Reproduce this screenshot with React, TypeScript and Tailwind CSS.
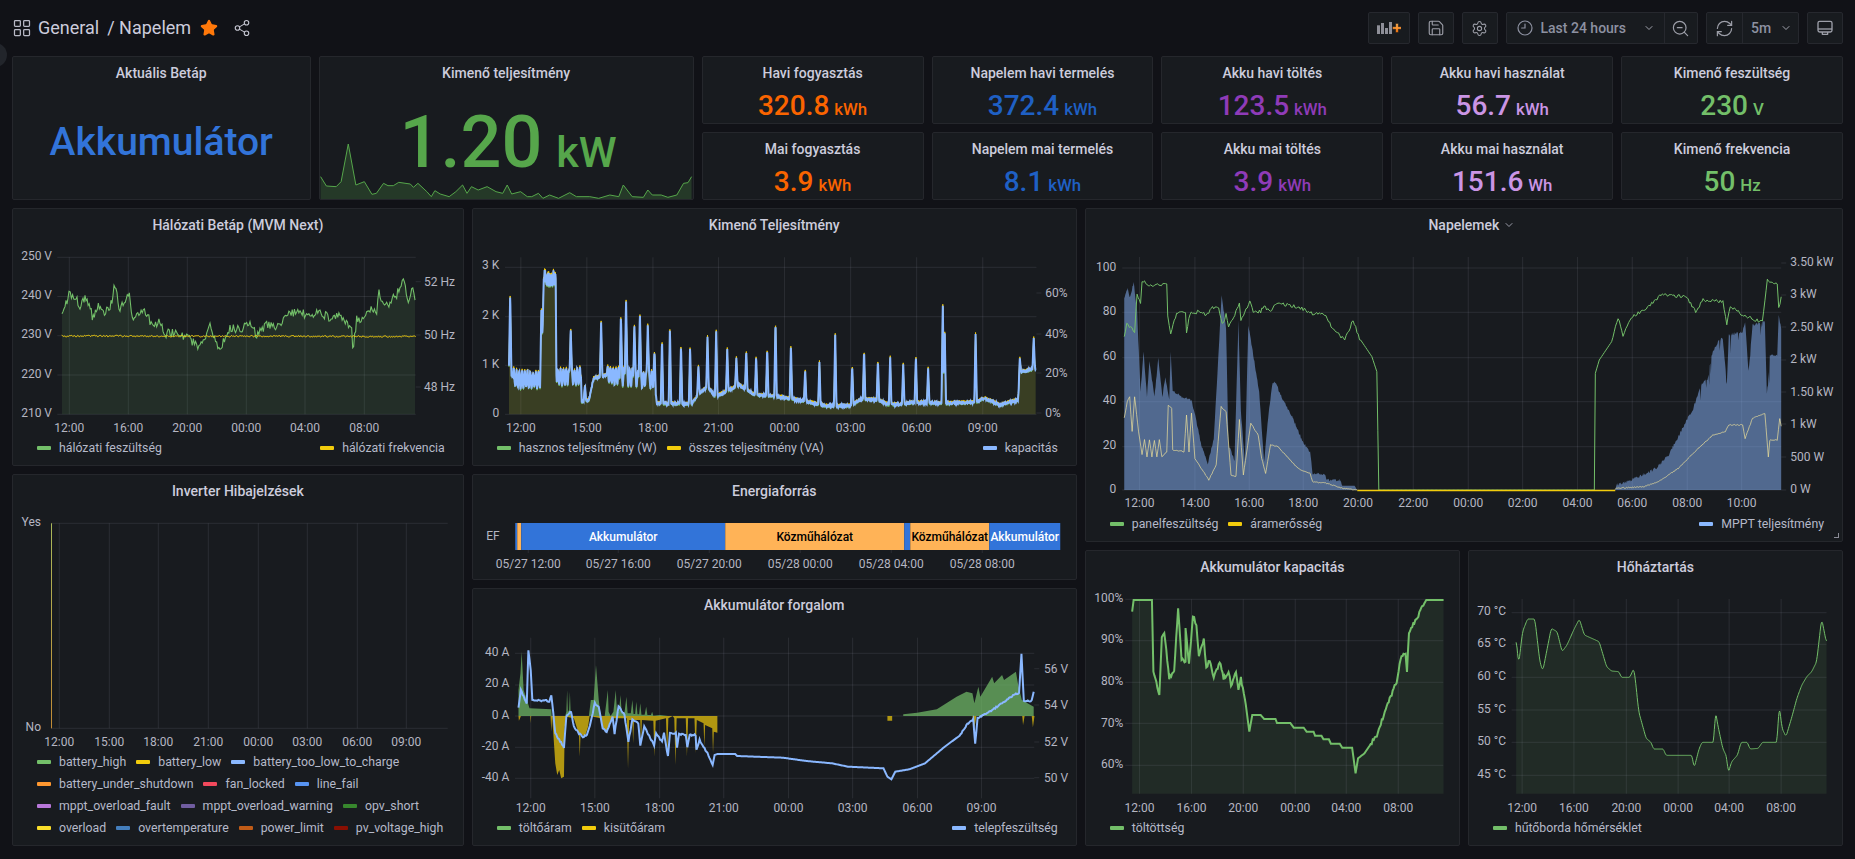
import React from "react";
import { LayoutGrid, Star, Share2, Save, Settings, ZoomOut, RefreshCw, ChevronDown } from "lucide-react";

type P = [number, number];

const colX = (k: number) => 12 + k * 76.625;
const colW = (n: number) => n * 76.625 - 8;

const rng = (seed: number) => {
  let s = seed;
  return () => {
    s = (s * 16807) % 2147483647;
    return s / 2147483647;
  };
};
const z = (pts: P[], ox: number, sx: number, oy = 205): P[] => pts.map(([x, y]) => [ox + x / sx, oy + y / 3]);
const resample = (pts: P[], step: number): P[] => {
  const out: P[] = [];
  for (let i = 0; i < pts.length - 1; i++) {
    const [a, b] = pts[i];
    const [c, d] = pts[i + 1];
    const n = Math.max(1, Math.round(Math.abs(c - a) / step));
    for (let j = 0; j < n; j++) out.push([a + ((c - a) * j) / n, b + ((d - b) * j) / n]);
  }
  out.push(pts[pts.length - 1]);
  return out;
};
const noisy = (pts: P[], step: number, amp: number, seed: number, when: (x: number, y: number) => boolean = () => true): P[] => {
  const r = rng(seed);
  return resample(pts, step).map(([x, y]) => {
    const n = (r() - 0.5) * 2 * amp;
    return [x, when(x, y) ? y + n : y] as P;
  });
};
const smooth = (pts: P[], step: number, win: number): P[] => {
  const a = resample(pts, step);
  return a.map((p, i) => {
    let s = 0;
    let c = 0;
    for (let j = Math.max(0, i - win); j <= Math.min(a.length - 1, i + win); j++) {
      s += a[j][1];
      c++;
    }
    return [p[0], s / c] as P;
  });
};
const line = (pts: P[]) => "M" + pts.map(([x, y]) => `${x.toFixed(2)} ${y.toFixed(2)}`).join("L");
const area = (pts: P[], base: number) =>
  `${line(pts)}L${pts[pts.length - 1][0].toFixed(2)} ${base}L${pts[0][0].toFixed(2)} ${base}Z`;

const GRID = "rgba(204,204,220,0.11)";
const AXIS = "#b5b6c2";

function Grid({ h = [], v = [], x1, x2, y1, y2 }: { h?: number[]; v?: number[]; x1: number; x2: number; y1: number; y2: number }) {
  return (
    <g stroke={GRID} strokeWidth={1}>
      {h.map((y) => (
        <line key={"h" + y} x1={x1} x2={x2} y1={y} y2={y} />
      ))}
      {v.map((x) => (
        <line key={"v" + x} x1={x} x2={x} y1={y1} y2={y2} />
      ))}
    </g>
  );
}
function Labels({ items, anchor, x }: { items: [string, number][]; anchor: "start" | "end"; x: number }) {
  return (
    <g fill={AXIS} fontSize={12} textAnchor={anchor} dominantBaseline="central">
      {items.map(([t, y]) => (
        <text key={t} x={x} y={y}>
          {t}
        </text>
      ))}
    </g>
  );
}
function XLabels({ items, y }: { items: [string, number][]; y: number }) {
  return (
    <g fill={AXIS} fontSize={12} textAnchor="middle" dominantBaseline="central">
      {items.map(([t, x]) => (
        <text key={t} x={x} y={y}>
          {t}
        </text>
      ))}
    </g>
  );
}
function Ticks({ x, ys }: { x: number; ys: number[] }) {
  return (
    <g stroke={GRID}>
      {ys.map((y) => (
        <line key={y} x1={x} x2={x + 5} y1={y} y2={y} />
      ))}
    </g>
  );
}

function Chart({ k, n, top, h, children }: { k: number; n: number; top: number; h: number; children: React.ReactNode }) {
  const x0 = colX(k) + 1;
  const y0 = top + 33;
  const w = colW(n) - 2;
  return (
    <svg className="block shrink-0" width={w} height={h} viewBox={`${x0} ${y0} ${w} ${h}`}>
      {children}
    </svg>
  );
}

function Panel({ className, title, chevron, children }: { className: string; title: string; chevron?: boolean; children: React.ReactNode }) {
  return (
    <section className={`relative flex flex-col overflow-hidden rounded-[2px] border border-[#25272c] bg-[#181b1f] ${className}`}>
      <h2 className="flex h-8 shrink-0 items-center justify-center text-sm font-medium text-[#ccccdc]">
        <span className="relative">
          {title}
          {chevron && <ChevronDown size={12} className="absolute left-full top-[4px] ml-1 text-[#9a9ba8]" />}
        </span>
      </h2>
      {children}
    </section>
  );
}

function Stat({ className, title, value, unit, color }: { className: string; title: string; value: string; unit: string; color: string }) {
  return (
    <Panel className={className} title={title}>
      <div className="flex items-baseline justify-center gap-[5px] font-medium" style={{ color }}>
        <span className="text-[28px] leading-[34px]">{value}</span>
        <span className="text-[16.8px] leading-[34px]">{unit}</span>
      </div>
    </Panel>
  );
}

function Item({ color, label }: { color: string; label: string }) {
  return (
    <div className="flex items-center gap-2">
      <span className="h-1 w-[14px] rounded-[1px]" style={{ backgroundColor: color }} />
      <span>{label}</span>
    </div>
  );
}
function Legend({ left, right }: { left: [string, string][]; right?: [string, string][] }) {
  return (
    <div className="flex h-[22px] shrink-0 items-center justify-between pl-6 pr-[18px] text-[12.3px] text-[#b5b9c9]">
      <div className="flex items-center gap-[10px]">
        {left.map(([c, l]) => (
          <Item key={l} color={c} label={l} />
        ))}
      </div>
      {right && (
        <div className="flex items-center gap-[10px]">
          {right.map(([c, l]) => (
            <Item key={l} color={c} label={l} />
          ))}
        </div>
      )}
    </div>
  );
}

const GREEN = "#73BF69";
const YELLOW = "#F2CC0C";
const BLUE = "#8AB8FF";

/* ---- Hálózati ---- */
const voltKeys: P[] = [[186,340],[195,310],[207,265],[225,270],[240,310],[255,275],[280,340],[295,300],[310,330],[330,310],[345,240],[360,320],[385,260],[400,340],[430,310],[450,350],[480,355],[495,385],[530,385],[560,400],[600,425],[630,365],[660,435],[690,370],[720,370],[750,360],[770,390],[800,355],[840,370],[860,320],[900,325],[930,330],[960,320],[1000,345],[1020,330],[1055,370],[1058,435],[1070,345],[1090,340],[1100,310],[1130,320],[1137,265],[1160,300],[1190,270],[1210,225],[1225,300],[1235,240],[1245,280]];
const volt = noisy(z(voltKeys, 0, 3), 1.1, 4.5, 77);
const freq = noisy([[61.7, 336], [415.7, 336.5]], 1, 0.8, 991);

function GridPower() {
  return (
    <Chart k={0} n={6} top={208} h={196}>
      <Grid h={[257.3, 296.5, 335.7, 375, 414.3]} v={[69.3, 128.3, 187.3, 246.3, 305, 364.3]} x1={57.3} x2={415.7} y1={257.3} y2={414.3} />
      <path d={area(volt, 414.3)} fill={GREEN} fillOpacity={0.12} />
      <path d={line(volt)} fill="none" stroke={GREEN} strokeWidth={1.1} />
      <path d={line(freq)} fill="none" stroke={YELLOW} strokeWidth={1} />
      <Labels anchor="end" x={52} items={[["250 V", 256], ["240 V", 295], ["230 V", 334], ["220 V", 374], ["210 V", 413]]} />
      <Ticks x={415.7} ys={[281.7, 335, 387]} />
      <Labels anchor="start" x={424} items={[["52 Hz", 281.7], ["50 Hz", 335], ["48 Hz", 387]]} />
      <XLabels y={427.7} items={[["12:00", 69.3], ["16:00", 128.3], ["20:00", 187.3], ["00:00", 246.3], ["04:00", 305], ["08:00", 364.3]]} />
    </Chart>
  );
}

/* ---- Kimenő ---- */
const baseKeys: P[] = [[98,500],[105,510],[120,525],[180,525],[186,220],[216,220],[218,515],[280,515],[282,590],[300,585],[312,520],[345,510],[465,525],[472,595],[560,597],[575,570],[600,545],[620,575],[680,540],[720,570],[780,575],[850,590],[900,603],[960,603],[990,582],[1030,585],[1060,600],[1130,592],[1200,595],[1280,592],[1300,580],[1340,600],[1385,585],[1392,500],[1430,492]];
const spikes: P[] = [[101,262],[180,315],[254,365],[290,540],[331,350],[381,330],[394,280],[415,355],[429,320],[449,352],[466,437],[485,400],[505,365],[533,417],[556,422],[577,482],[600,395],[622,373],[650,432],[673,458],[698,435],[723,452],[751,428],[772,343],[811,418],[847,493],[883,467],[923,388],[966,480],[996,433],[1031,464],[1062,452],[1095,478],[1127,452],[1158,490],[1195,293],[1200,385],[1278,380],[1390,458],[1425,397]];
const loadPts = (() => {
  const r = rng(4242);
  const pts = resample(baseKeys, 0.7);
  return pts.map(([x, y]) => {
    let v = y;
    const osc = (x > 108 && x < 180) || (x > 218 && x < 280) || (x > 345 && x < 465);
    if (osc) v += Math.sin(x * 0.9) * 28 * (0.6 + r() * 0.5);
    else if (x > 186 && x < 216) v += (r() - 0.5) * 50;
    else v += (r() - 0.5) * 6;
    for (const [sx, st] of spikes) {
      const d = Math.abs(x - sx);
      if (d < 3.2) v = v + (st - v) * (1 - d / 3.2);
    }
    return [x, v] as P;
  });
})();
const blueLoad = z(loadPts, 470, 2.529);
const yellowLoad = blueLoad.map(([x, y]) => [x, y - 1.5] as P);
const greenLoad = blueLoad.map(([x, y]) => [x, y + 1.2] as P);

function OutPower() {
  return (
    <Chart k={6} n={8} top={208} h={196}>
      <Grid h={[267.3, 316.7, 365.3, 414.3]} v={[520.6, 586.6, 652.7, 718.3, 784.3, 850.4, 916.4, 982.5]} x1={504.8} x2={1036.2} y1={257.3} y2={414.3} />
      <path d={area(greenLoad, 414.3)} fill={GREEN} fillOpacity={0.11} />
      <path d={area(yellowLoad, 414.3)} fill={YELLOW} fillOpacity={0.11} />
      <path d={line(greenLoad)} fill="none" stroke={GREEN} strokeWidth={1} />
      <path d={line(yellowLoad)} fill="none" stroke={YELLOW} strokeWidth={1} />
      <path d={line(blueLoad)} fill="none" stroke={BLUE} strokeWidth={2} />
      <Labels anchor="end" x={499} items={[["3 K", 265], ["2 K", 315], ["1 K", 364], ["0", 413]]} />
      <Ticks x={1036.2} ys={[293, 334, 373, 413]} />
      <Labels anchor="start" x={1045} items={[["60%", 293], ["40%", 334], ["20%", 373], ["0%", 413]]} />
      <XLabels y={427.7} items={[["12:00", 520.6], ["15:00", 586.6], ["18:00", 652.7], ["21:00", 718.3], ["00:00", 784.3], ["03:00", 850.4], ["06:00", 916.4], ["09:00", 982.5]]} />
    </Chart>
  );
}

/* ---- Napelemek ---- */
const mpptL: P[] = [[89,855],[89,280],[96,250],[100,280],[108,232],[115,320],[122,560],[128,440],[135,575],[140,465],[150,578],[158,460],[166,575],[172,520],[180,580],[183,440],[187,555],[205,575],[225,585],[235,650],[245,720],[258,778],[270,700],[280,440],[286,270],[295,370],[300,720],[312,765],[320,350],[325,620],[333,770],[340,360],[350,450],[362,560],[372,770],[380,640],[388,540],[395,530],[405,570],[430,640],[450,710],[465,740],[470,805],[495,810],[500,825],[525,825],[530,842],[555,842],[560,855]];
const mpptR: P[] = [[1082,855],[1085,840],[1115,825],[1140,808],[1165,790],[1190,750],[1215,680],[1240,610],[1255,540],[1270,520],[1277,450],[1290,410],[1300,400],[1308,540],[1312,390],[1340,380],[1345,350],[1352,500],[1360,360],[1385,350],[1389,570],[1395,450],[1410,450],[1413,330],[1418,370],[1418,855]];
const mL = noisy(z(mpptL, 1080, 2.023), 0.6, 1.4, 55, (x, y) => y < 485 && x > 1125);
const mR = (() => {
  const r = rng(66);
  return resample(z(mpptR, 1080, 2.023), 0.6).map(([x, y]) => {
    if (y >= 485) return [x, y] as P;
    const deep = x > 1700 && r() < 0.12;
    return [x, y + (deep ? r() * 22 : (r() - 0.5) * 3)] as P;
  });
})();
const panelV = noisy(z([[89,400],[94,355],[110,380],[115,265],[122,300],[125,228],[140,240],[175,240],[177,330],[183,385],[195,325],[213,318],[215,385],[222,325],[240,320],[255,330],[265,310],[280,305],[287,360],[295,330],[300,365],[315,320],[322,290],[325,350],[343,290],[350,320],[365,320],[372,300],[382,320],[400,295],[440,305],[470,325],[497,330],[510,370],[535,405],[552,345],[565,400],[590,455],[600,500],[604,855],[1040,855],[1042,505],[1050,465],[1075,410],[1088,340],[1098,390],[1115,335],[1145,310],[1175,270],[1225,275],[1245,320],[1260,285],[1300,290],[1308,360],[1315,305],[1345,335],[1380,350],[1390,225],[1410,240],[1413,310],[1418,275]], 1080, 2.023), 1.3, 1.7, 88, (x, y) => y < 340);
const ampL = noisy(z([[89,640],[95,590],[100,575],[105,680],[110,575],[118,680],[125,750],[130,705],[135,755],[140,705],[145,755],[150,705],[155,755],[160,705],[165,755],[175,740],[178,600],[185,610],[187,735],[210,740],[215,630],[220,740],[225,625],[232,760],[245,790],[260,825],[275,780],[285,605],[295,620],[305,810],[315,815],[322,645],[330,810],[345,655],[360,690],[367,760],[375,805],[385,720],[400,725],[440,790],[465,805],[470,830],[500,835],[530,850],[560,855]], 1080, 2.023), 1, 0.5, 21);
const ampR = noisy(z([[1082,855],[1085,850],[1140,845],[1170,830],[1210,790],[1250,730],[1280,690],[1305,680],[1312,660],[1340,660],[1345,700],[1360,640],[1385,625],[1392,755],[1395,705],[1410,705],[1415,640],[1418,665]], 1080, 2.023), 1, 0.5, 31);

function Solar() {
  const y0 = 490;
  return (
    <Chart k={14} n={10} top={208} h={272}>
      <Grid h={[268, 312.3, 357.7, 401.7, 446.7, 490]} v={[1139.3, 1194.7, 1249, 1303, 1357.8, 1413, 1468, 1522.4, 1577.3, 1632, 1687, 1741.4]} x1={1122} x2={1781} y1={257} y2={490} />
      <path d={`${line(mL)}Z`} fill={BLUE} fillOpacity={0.5} />
      <path d={`${line(mR)}Z`} fill={BLUE} fillOpacity={0.5} />
      <path d={line(panelV)} fill="none" stroke={GREEN} strokeWidth={1} />
      <path d={line(ampL)} fill="none" stroke="#ecdf9a" strokeOpacity={0.7} strokeWidth={1} />
      <path d={line(ampR)} fill="none" stroke="#ecdf9a" strokeOpacity={0.7} strokeWidth={1} />
      <line x1={1357} x2={1615} y1={y0 + 0.5} y2={y0 + 0.5} stroke={YELLOW} strokeWidth={1.5} />
      <Labels anchor="end" x={1116} items={[["100", 267], ["80", 311], ["60", 356], ["40", 400], ["20", 445], ["0", 488.7]]} />
      <Ticks x={1781} ys={[263, 295, 327, 360, 392, 424, 457, 490]} />
      <Labels anchor="start" x={1790} items={[["3.50 kW", 261.7], ["3 kW", 294.3], ["2.50 kW", 326.7], ["2 kW", 359], ["1.50 kW", 391.7], ["1 kW", 424], ["500 W", 456.7], ["0 W", 488.7]]} />
      <XLabels y={503} items={[["12:00", 1139.3], ["14:00", 1194.7], ["16:00", 1249], ["18:00", 1303], ["20:00", 1357.8], ["22:00", 1413], ["00:00", 1468], ["02:00", 1522.4], ["04:00", 1577.3], ["06:00", 1632], ["08:00", 1687], ["10:00", 1741.4]]} />
    </Chart>
  );
}

/* ---- Inverter ---- */
function Faults() {
  const xs: [string, number][] = [["12:00", 59.3], ["15:00", 109.3], ["18:00", 158.3], ["21:00", 208.3], ["00:00", 258.3], ["03:00", 307.3], ["06:00", 357.3], ["09:00", 406.3]];
  return (
    <Chart k={0} n={6} top={474} h={244}>
      <defs>
        <linearGradient id="faultLine" x1="0" x2="0" y1="0" y2="1">
          <stop offset="0" stopColor="#a9b85a" />
          <stop offset="1" stopColor="#c08a35" />
        </linearGradient>
      </defs>
      <Grid h={[523.3, 728.3]} v={xs.map((a) => a[1])} x1={51} x2={447.7} y1={523.3} y2={728.3} />
      <rect x={51} y={523.3} width={1} height={205} fill="url(#faultLine)" />
      <Labels anchor="end" x={41} items={[["Yes", 521.7], ["No", 726.7]]} />
      <XLabels y={741.7} items={xs} />
    </Chart>
  );
}

/* ---- Energiaforrás ---- */
function Source() {
  const segs: [number, number, string][] = [[515,517,"#3274D9"],[517,521,"#FFB357"],[521,725,"#3274D9"],[725,904,"#FFB357"],[904,910,"#3274D9"],[910,989,"#FFB357"],[989,1060,"#3274D9"]];
  const texts: [string, number, string][] = [["Akkumulátor",623,"#ffffff"],["Közműhálózat",814.5,"#000000"],["Közműhálózat",949.5,"#000000"],["Akkumulátor",1024.5,"#ffffff"]];
  const xs: [string, number][] = [["05/27 12:00",528],["05/27 16:00",618],["05/27 20:00",709],["05/28 00:00",800],["05/28 04:00",891],["05/28 08:00",982]];
  return (
    <Chart k={6} n={8} top={474} h={71}>
      {segs.map(([a, b, c]) => (
        <rect key={a} x={a} y={523} width={b - a} height={27} fill={c} />
      ))}
      {texts.map(([t, x, c]) => (
        <text key={x} x={x} y={536.5} fontSize={12} fontWeight={500} fill={c} textAnchor="middle" dominantBaseline="central">
          {t}
        </text>
      ))}
      <text x={486} y={536} fontSize={12} fill={AXIS} dominantBaseline="central">
        EF
      </text>
      {xs.map(([, x]) => (
        <line key={x} x1={x} x2={x} y1={550} y2={553} stroke={GRID} />
      ))}
      <XLabels y={563.7} items={xs} />
    </Chart>
  );
}

/* ---- Akkumulátor forgalom ---- */
const chargeKeys: P[] = [[122,738],[122,660],[127,610],[130,545],[135,660],[150,715],[205,718],[206,738],[240,738],[243,725],[245,660],[247,725],[250,720],[252,665],[254,730],[255,738],[300,738],[305,690],[312,690],[318,585],[325,690],[330,738],[340,738],[348,660],[350,725],[355,738],[362,725],[368,660],[371,725],[376,725],[380,675],[383,728],[390,728],[395,680],[398,730],[406,730],[410,690],[413,732],[417,732],[420,695],[423,733],[427,733],[430,700],[433,734],[441,734],[445,710],[448,735],[457,735],[460,725],[463,737],[480,735],[500,738],[1095,738],[1095,733],[1130,728],[1180,718],[1230,680],[1255,665],[1270,670],[1275,700],[1285,650],[1290,680],[1320,620],[1325,640],[1345,615],[1350,630],[1380,605],[1385,640],[1395,690],[1425,710],[1425,738]];
const dischargeKeys: P[] = [[122,738],[123,752],[126,745],[128,738],[152,738],[153,760],[154,738],[203,738],[205,785],[207,738],[210,790],[215,880],[220,915],[225,900],[230,925],[237,920],[239,770],[243,740],[262,745],[270,775],[275,790],[277,860],[279,790],[290,800],[298,770],[302,738],[330,745],[336,775],[345,790],[352,760],[358,745],[396,745],[399,895],[402,750],[410,750],[412,820],[414,750],[430,750],[432,830],[434,750],[463,752],[466,860],[469,752],[495,745],[498,860],[501,745],[512,738],[516,745],[519,885],[522,745],[545,745],[548,860],[551,745],[567,745],[570,850],[573,750],[590,760],[592,830],[594,765],[612,775],[614,850],[616,785],[625,788],[625,738]];
const smallDis: P[][] = [[[1055,738],[1055,752],[1067,752],[1067,738]],[[1270,738],[1275,775],[1280,738]],[[1396,738],[1398,765],[1402,738]],[[1420,738],[1423,772],[1427,738]]];
const battV = noisy(z([[122,715],[128,660],[135,680],[143,700],[147,540],[153,600],[157,690],[200,693],[205,675],[210,730],[215,790],[237,832],[243,740],[255,725],[262,770],[275,790],[285,800],[295,795],[305,755],[315,700],[325,710],[335,775],[345,785],[360,740],[365,790],[375,710],[390,735],[400,815],[410,750],[425,760],[430,825],[440,770],[465,825],[470,790],[485,815],[490,790],[500,860],[505,790],[520,790],[523,835],[528,792],[545,795],[549,832],[555,795],[570,795],[572,840],[580,810],[600,850],[613,885],[618,855],[625,852],[670,852],[675,858],[720,860],[790,863],[850,873],[915,880],[955,890],[1045,895],[1055,920],[1065,928],[1075,905],[1110,898],[1150,880],[1200,830],[1240,795],[1255,765],[1272,748],[1277,820],[1283,745],[1320,720],[1380,670],[1388,670],[1394,550],[1400,692],[1420,692],[1425,665]], 470, 2.529, 470), 1, 0.8, 101, (x) => x < 712 || x > 960);

function Flow() {
  const toP = (p: P[]) => z(p, 470, 2.529, 470);
  const xs: [string, number][] = [["12:00",530.5],["15:00",594.6],["18:00",659.4],["21:00",723.5],["00:00",788.3],["03:00",852.4],["06:00",917.2],["09:00",981.3]];
  return (
    <Chart k={6} n={8} top={588} h={196}>
      <Grid h={[653.3, 685, 716, 747.3, 778.3]} v={xs.map((a) => a[1])} x1={514.7} x2={1034} y1={637.7} y2={798.3} />
      <path d={`${line(toP(chargeKeys))}Z`} fill={GREEN} fillOpacity={0.7} />
      <path d={`${line(toP(dischargeKeys))}Z`} fill={YELLOW} fillOpacity={0.7} />
      {smallDis.map((s, i) => (
        <path key={i} d={`${line(toP(s))}Z`} fill={YELLOW} fillOpacity={0.7} />
      ))}
      <path d={line(battV)} fill="none" stroke={BLUE} strokeWidth={2} />
      <Labels anchor="end" x={509} items={[["40 A", 651.5], ["20 A", 682.5], ["0 A", 715], ["-20 A", 746], ["-40 A", 777]]} />
      <Ticks x={1034} ys={[668.7, 705, 742, 777.7]} />
      <Labels anchor="start" x={1043.7} items={[["56 V", 668.7], ["54 V", 705], ["52 V", 742], ["50 V", 777.7]]} />
      <XLabels y={807.7} items={xs} />
    </Chart>
  );
}

/* ---- Kapacitás ---- */
const soc = noisy(z([[105,200],[108,165],[145,165],[148,380],[160,447],[165,280],[170,260],[180,400],[190,380],[198,185],[205,340],[213,350],[213,250],[220,360],[228,210],[235,240],[240,330],[250,285],[255,370],[262,345],[270,400],[282,350],[290,400],[300,380],[305,420],[315,385],[320,430],[325,400],[335,480],[342,560],[348,510],[365,510],[372,522],[395,522],[398,534],[425,534],[432,548],[452,548],[458,560],[472,560],[475,572],[488,572],[492,583],[503,583],[507,596],[525,596],[530,608],[550,608],[557,685],[562,640],[575,625],[600,570],[620,485],[640,410],[650,330],[658,325],[661,385],[665,260],[680,225],[690,190],[700,165],[735,165]], 1080, 2.023, 545), 1, 1.8, 313, (x) => (x > 1155 && x < 1245) || (x > 1370 && x < 1425));

function Capacity() {
  const xs: [string, number][] = [["12:00",1139.3],["16:00",1191.2],["20:00",1243],["00:00",1295],["04:00",1346],["08:00",1398]];
  return (
    <Chart k={14} n={5} top={550} h={234}>
      <Grid h={[599.3, 640.7, 682.3, 723.3, 765.3]} v={xs.map((a) => a[1])} x1={1125} x2={1443} y1={599.3} y2={793.7} />
      <path d={area(soc, 793.7)} fill={GREEN} fillOpacity={0.1} />
      <path d={line(soc)} fill="none" stroke={GREEN} strokeWidth={2} />
      <Labels anchor="end" x={1123} items={[["100%", 598], ["90%", 639], ["80%", 681], ["70%", 722.5], ["60%", 764]]} />
      <XLabels y={807.7} items={xs} />
    </Chart>
  );
}

const temp = smooth(z([[882,275],[887,360],[895,260],[905,222],[920,222],[930,350],[936,378],[945,310],[953,250],[965,260],[975,320],[985,300],[1000,250],[1010,222],[1020,270],[1050,290],[1065,365],[1075,378],[1090,380],[1095,397],[1112,397],[1120,370],[1123,400],[1130,500],[1145,580],[1155,592],[1160,612],[1180,612],[1185,631],[1238,631],[1242,670],[1252,612],[1258,592],[1282,592],[1285,495],[1290,540],[1300,610],[1308,635],[1311,685],[1318,650],[1330,630],[1337,592],[1350,592],[1355,612],[1372,610],[1380,592],[1410,592],[1414,478],[1420,550],[1428,575],[1440,515],[1450,460],[1460,420],[1470,395],[1480,380],[1490,350],[1500,220],[1510,295]], 1080, 2.023, 545), 0.5, 2);

function Heat() {
  const xs: [string, number][] = [["12:00",1522],["16:00",1573.8],["20:00",1626.2],["00:00",1678],["04:00",1729],["08:00",1781]];
  return (
    <Chart k={19} n={5} top={550} h={234}>
      <Grid h={[612.7, 644.3, 677.3, 710, 742.3, 775.3]} v={xs.map((a) => a[1])} x1={1511.5} x2={1826.4} y1={599} y2={793.7} />
      <path d={area(temp, 793.7)} fill={GREEN} fillOpacity={0.1} />
      <path d={line(temp)} fill="none" stroke={GREEN} strokeWidth={1} />
      <Labels anchor="end" x={1506} items={[["70 °C", 611], ["65 °C", 642.5], ["60 °C", 676], ["55 °C", 708.5], ["50 °C", 741], ["45 °C", 774]]} />
      <XLabels y={807.7} items={xs} />
    </Chart>
  );
}

/* ---- Sparkline ---- */
const spark = z([[717,530],[730,558],[752,560],[763,545],[779,432],[796,555],[815,545],[832,583],[842,580],[858,550],[868,557],[880,557],[892,547],[918,552],[925,562],[935,550],[955,575],[965,590],[973,572],[985,582],[1005,590],[1020,575],[1035,555],[1045,580],[1055,560],[1070,570],[1090,560],[1110,575],[1125,580],[1135,555],[1145,582],[1165,575],[1180,590],[1190,590],[1205,580],[1215,595],[1230,585],[1250,595],[1275,578],[1290,590],[1320,590],[1340,595],[1365,585],[1385,590],[1395,555],[1415,590],[1440,592],[1450,570],[1460,585],[1480,585],[1495,592],[1515,585],[1530,550],[1540,548],[1548,530]], 0, 2.24, 0);

function Spark() {
  const x0 = colX(4) + 1;
  const w = colW(5) - 2;
  return (
    <svg className="absolute bottom-0 left-0" width={w} height={60} viewBox={`${x0} 139 ${w} 60`}>
      <path d={area(spark, 199)} fill="#56A64B" fillOpacity={0.22} />
      <path d={line(spark)} fill="none" stroke="#56A64B" strokeWidth={1} />
    </svg>
  );
}

/* ---- Toolbar ---- */
const btn = "flex h-8 items-center justify-center rounded-[2px] border border-[#26282e] bg-[#181b1f] text-[#9d9fa9]";

function AddPanelIcon() {
  return (
    <svg width="24" height="16" viewBox="0 0 24 16">
      <defs>
        <linearGradient id="plusGrad" x1="0" x2="0" y1="0" y2="1">
          <stop offset="0" stopColor="#FFB357" />
          <stop offset="1" stopColor="#FF780A" />
        </linearGradient>
      </defs>
      <g fill="#8e8f98">
        <rect x="0" y="5.3" width="3" height="8.7" />
        <rect x="4" y="3" width="3" height="11" />
        <rect x="8" y="8" width="3" height="6" />
        <rect x="12" y="2" width="3" height="12" />
      </g>
      <path d="M18.7 3.5h2.6v3.2h3.2v2.6h-3.2v3.2h-2.6V9.3h-3.2V6.7h3.2z" fill="url(#plusGrad)" stroke="#181b1f" strokeWidth="0.5" />
    </svg>
  );
}
function ClockIcon() {
  return (
    <svg width="16" height="16" viewBox="0 0 24 24" fill="none" stroke="currentColor" strokeWidth="1.8" strokeLinecap="round">
      <circle cx="12" cy="12" r="10.5" />
      <path d="M12 6v6H7" />
    </svg>
  );
}
function MonitorIcon() {
  return (
    <svg width="16" height="16" viewBox="0 0 24 24" fill="none" stroke="currentColor" strokeWidth="2" strokeLinejoin="round">
      <rect x="1.5" y="2" width="21" height="16" rx="2.5" />
      <path d="M1.5 13.5h21" />
      <path d="M8 18v3.5h8V18" />
    </svg>
  );
}

function Header() {
  return (
    <header className="flex h-14 items-center pl-[12px] pr-3">
      <LayoutGrid size={20} strokeWidth={1.5} className="text-[#b9bac6]" />
      <div className="ml-[6px] flex items-center text-lg leading-6 text-[#ccccdc]">
        <span>General</span>
        <span className="ml-2">/ Napelem</span>
      </div>
      <Star size={18} className="ml-[9px] fill-[#FF780A] text-[#FF780A]" />
      <Share2 size={18} strokeWidth={1.5} className="ml-[15px] text-[#c4c5d0]" />
      <div className="ml-auto flex items-center gap-2">
        <button className={`${btn} w-[42px]`}>
          <AddPanelIcon />
        </button>
        <button className={`${btn} w-9`}>
          <Save size={18} strokeWidth={1.5} />
        </button>
        <button className={`${btn} w-9`}>
          <Settings size={17} strokeWidth={1.5} />
        </button>
        <div className={`${btn} w-[192.5px]`}>
          <div className="flex h-full w-[157px] items-center gap-2 pl-[10px] text-sm font-medium text-[#8d91a1]">
            <ClockIcon />
            <span>Last 24 hours</span>
            <ChevronDown size={12} className="ml-[9px] text-[#a0a2ac]" />
          </div>
          <div className="flex h-full flex-1 items-center justify-center border-l border-[#26282e]">
            <ZoomOut size={19} strokeWidth={1.5} />
          </div>
        </div>
        <div className={`${btn} w-[93px]`}>
          <div className="flex h-full w-[35px] items-center justify-center">
            <RefreshCw size={19} strokeWidth={1.5} />
          </div>
          <div className="flex h-full flex-1 items-center gap-[9px] border-l border-[#26282e] pl-2 text-sm font-medium text-[#8d91a1]">
            <span>5m</span>
            <ChevronDown size={12} className="text-[#a0a2ac]" />
          </div>
        </div>
        <button className={`${btn} w-9`}>
          <MonitorIcon />
        </button>
      </div>
    </header>
  );
}

export default function App() {
  return (
    <div className="relative h-[859px] w-full overflow-hidden bg-[#111217] [font-family:Roboto,sans-serif]">
      <Header />
      <div className="absolute left-[-17px] top-[43px] h-6 w-6 rounded-full bg-[#22252b]" />
      <main className="grid grid-cols-24 auto-rows-[30px] gap-2 px-3">
        <Panel className="col-start-1 col-span-4 row-start-1 row-span-4" title="Aktuális Betáp">
          <div className="flex flex-1 items-center justify-center pb-[3px] text-[39px] font-medium text-[#3274D9]">Akkumulátor</div>
        </Panel>
        <Panel className="col-start-5 col-span-5 row-start-1 row-span-4" title="Kimenő teljesítmény">
          <Spark />
          <div className="relative flex flex-1 items-baseline justify-center gap-[14px] pl-1 pt-[9px] font-medium leading-[90px] text-[#56A64B]">
            <span className="text-[72px]">1.20</span>
            <span className="text-[43px]">kW</span>
          </div>
        </Panel>

        <Stat className="col-start-10 col-span-3 row-start-1 row-span-2" title="Havi fogyasztás" value="320.8" unit="kWh" color="#FA6400" />
        <Stat className="col-start-13 col-span-3 row-start-1 row-span-2" title="Napelem havi termelés" value="372.4" unit="kWh" color="#1F60C4" />
        <Stat className="col-start-16 col-span-3 row-start-1 row-span-2" title="Akku havi töltés" value="123.5" unit="kWh" color="#8F3BB8" />
        <Stat className="col-start-19 col-span-3 row-start-1 row-span-2" title="Akku havi használat" value="56.7" unit="kWh" color="#CA95E5" />
        <Stat className="col-start-22 col-span-3 row-start-1 row-span-2" title="Kimenő feszültség" value="230" unit="V" color="#73BF69" />
        <Stat className="col-start-10 col-span-3 row-start-3 row-span-2" title="Mai fogyasztás" value="3.9" unit="kWh" color="#FA6400" />
        <Stat className="col-start-13 col-span-3 row-start-3 row-span-2" title="Napelem mai termelés" value="8.1" unit="kWh" color="#1F60C4" />
        <Stat className="col-start-16 col-span-3 row-start-3 row-span-2" title="Akku mai töltés" value="3.9" unit="kWh" color="#8F3BB8" />
        <Stat className="col-start-19 col-span-3 row-start-3 row-span-2" title="Akku mai használat" value="151.6" unit="Wh" color="#CA95E5" />
        <Stat className="col-start-22 col-span-3 row-start-3 row-span-2" title="Kimenő frekvencia" value="50" unit="Hz" color="#73BF69" />

        <Panel className="col-start-1 col-span-6 row-start-5 row-span-7" title="Hálózati Betáp (MVM Next)">
          <GridPower />
          <Legend left={[[GREEN, "hálózati feszültség"]]} right={[[YELLOW, "hálózati frekvencia"]]} />
        </Panel>
        <Panel className="col-start-7 col-span-8 row-start-5 row-span-7" title="Kimenő Teljesítmény">
          <OutPower />
          <Legend left={[[GREEN, "hasznos teljesítmény (W)"], [YELLOW, "összes teljesítmény (VA)"]]} right={[[BLUE, "kapacitás"]]} />
        </Panel>
        <Panel className="col-start-15 col-span-10 row-start-5 row-span-9" title="Napelemek" chevron>
          <Solar />
          <Legend left={[[GREEN, "panelfeszültség"], [YELLOW, "áramerősség"]]} right={[[BLUE, "MPPT teljesítmény"]]} />
          <div className="absolute bottom-[3px] right-[3px] h-[5px] w-[5px] border-b border-r border-[#8a8b96]" />
        </Panel>

        <Panel className="col-start-1 col-span-6 row-start-12 row-span-10" title="Inverter Hibajelzések">
          <Faults />
          <Legend left={[[GREEN, "battery_high"], [YELLOW, "battery_low"], [BLUE, "battery_too_low_to_charge"]]} />
          <Legend left={[["#FF9830", "battery_under_shutdown"], ["#F2495C", "fan_locked"], ["#5794F2", "line_fail"]]} />
          <Legend left={[["#B877D9", "mppt_overload_fault"], ["#705DA0", "mppt_overload_warning"], ["#37872D", "opv_short"]]} />
          <Legend left={[["#FADE2A", "overload"], ["#447EBC", "overtemperature"], ["#C15C17", "power_limit"], ["#890F02", "pv_voltage_high"]]} />
        </Panel>
        <Panel className="col-start-7 col-span-8 row-start-12 row-span-3" title="Energiaforrás">
          <Source />
        </Panel>
        <Panel className="col-start-7 col-span-8 row-start-15 row-span-7" title="Akkumulátor forgalom">
          <Flow />
          <Legend left={[[GREEN, "töltőáram"], [YELLOW, "kisütőáram"]]} right={[[BLUE, "telepfeszültség"]]} />
        </Panel>
        <Panel className="col-start-15 col-span-5 row-start-14 row-span-8" title="Akkumulátor kapacitás">
          <Capacity />
          <Legend left={[[GREEN, "töltöttség"]]} />
        </Panel>
        <Panel className="col-start-20 col-span-5 row-start-14 row-span-8" title="Hőháztartás">
          <Heat />
          <Legend left={[[GREEN, "hűtőborda hőmérséklet"]]} />
        </Panel>
      </main>
    </div>
  );
}
